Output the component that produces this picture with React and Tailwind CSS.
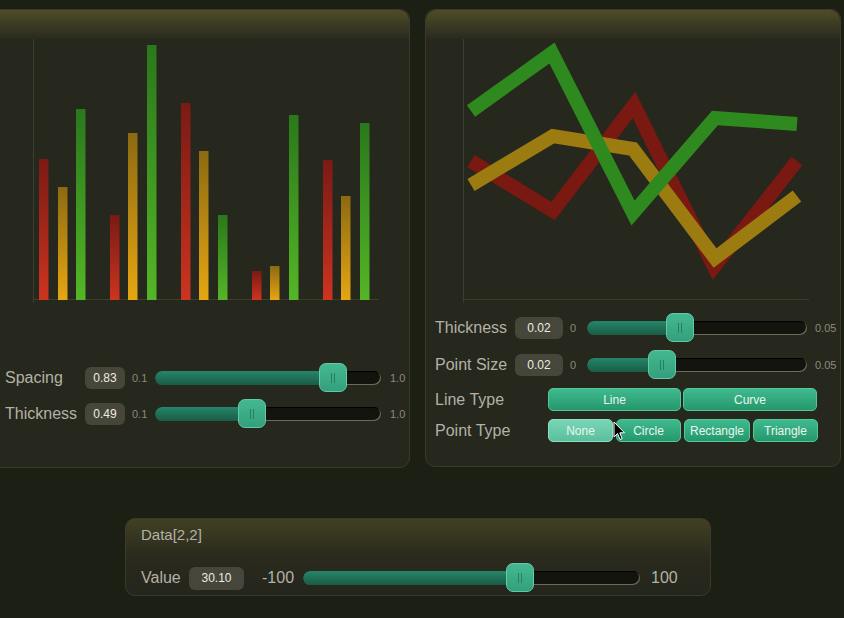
import React from "react";

const FONT = { fontFamily: '"Liberation Sans", Arial, sans-serif' };

function Slider({ trackW, thumbL, fillW }) {
  return (
    <div className={`relative h-[14px] rounded-full bg-[#14140f] shadow-[inset_-1px_-1px_0_#6b6b5a,inset_1px_1px_1px_#000] ${trackW}`}>
      <div className={`absolute left-0 top-0 bottom-0 rounded-full bg-linear-to-b from-[#25866a] to-[#1a5c45] ${fillW}`} />
      <div className={`absolute top-[-8px] w-[28px] h-[29px] rounded-[7px] bg-linear-to-b from-[#44b891] to-[#33a07c] border border-[#62cba6] flex items-center justify-center gap-[2px] ${thumbL}`}>
        <div className="w-[1px] h-[10px] bg-[#2a7d60]" />
        <div className="w-[1px] h-[10px] bg-[#2a7d60]" />
      </div>
    </div>
  );
}

function ValueBox({ w, children }) {
  return (
    <div className={`h-[22px] rounded-[6px] bg-[#47463a] flex items-center justify-center text-[12px] text-[#ecece4] ${w}`}>
      {children}
    </div>
  );
}

function Btn({ w, hover, children }) {
  return (
    <div
      className={`h-[23px] rounded-[5px] border flex items-center justify-center text-[12px] text-[#e8f6ee] ${w} ${
        hover
          ? "bg-linear-to-b from-[#78d6b6] to-[#5abf9e] border-[#8ce0c2]"
          : "bg-linear-to-b from-[#3fba8f] to-[#25976d] border-[#55c79d]"
      }`}
    >
      {children}
    </div>
  );
}

const bars = [
  [38, 158, "r"], [57, 186, "o"], [75, 108, "g"],
  [109, 214, "r"], [127, 132, "o"], [146, 44, "g"],
  [180, 102, "r"], [198, 150, "o"], [217, 214, "g"],
  [251, 270, "r"], [269, 265, "o"], [288, 114, "g"],
  [322, 159, "r"], [340, 195, "o"], [359, 122, "g"],
];

function BarChart() {
  return (
    <svg className="block" width="422" height="270" viewBox="-12 38 422 270">
      <defs>
        <linearGradient id="gr" x1="0" y1="0" x2="0" y2="1">
          <stop offset="0" stopColor="#7a1a14" />
          <stop offset="1" stopColor="#cc3420" />
        </linearGradient>
        <linearGradient id="go" x1="0" y1="0" x2="0" y2="1">
          <stop offset="0" stopColor="#8c6a12" />
          <stop offset="1" stopColor="#e6a612" />
        </linearGradient>
        <linearGradient id="gg" x1="0" y1="0" x2="0" y2="1">
          <stop offset="0" stopColor="#2a781c" />
          <stop offset="1" stopColor="#54b626" />
        </linearGradient>
      </defs>
      <line x1="32.5" y1="37" x2="32.5" y2="302" stroke="#3a3e30" strokeWidth="1" />
      <line x1="32" y1="298.5" x2="378" y2="298.5" stroke="#3a3e30" strokeWidth="1" />
      {bars.map(([x, top, c], i) => (
        <rect key={i} x={x} y={top} width="9.5" height={299 - top} fill={`url(#g${c})`} />
      ))}
    </svg>
  );
}

function LineChart() {
  return (
    <svg className="block" width="416" height="267" viewBox="425 38 416 267">
      <line x1="462.5" y1="37" x2="462.5" y2="302" stroke="#3a3e30" strokeWidth="1" />
      <line x1="462" y1="298.5" x2="808" y2="298.5" stroke="#3a3e30" strokeWidth="1" />
      <polyline
        points="470,160 552,210 633,104 713,266 796,160"
        fill="none"
        stroke="#7a1812"
        strokeWidth="14"
        strokeLinejoin="miter"
      />
      <polyline
        points="470,184 552,135 632,148 714,257 796,195"
        fill="none"
        stroke="#9c7c10"
        strokeWidth="14"
        strokeLinejoin="miter"
      />
      <polyline
        points="470,110 551,52 632,212 714,117 796,123"
        fill="none"
        stroke="#2e8a1e"
        strokeWidth="14"
        strokeLinejoin="miter"
      />
    </svg>
  );
}

function Header() {
  return <div className="h-[29px] rounded-t-[10px] bg-linear-to-b from-[#4f4d26] to-[#2a2a1e]" />;
}

export default function App() {
  return (
    <div
      className="relative w-[844px] h-[618px] overflow-hidden bg-[#1c2014]"
      style={FONT}
    >
      <div className="flex pt-[9px]">
        {/* Left panel */}
        <div className="ml-[-12px] w-[422px] h-[459px] rounded-[10px] bg-[#26271d] border border-[#3a3a2b] flex flex-col">
          <Header />
          <BarChart />
          <div className="mt-[54px] flex flex-col gap-[6px] pl-[16px]">
            <div className="flex items-center h-[30px]">
              <div className="w-[80px] text-[16px] text-[#b2b2a6]">Spacing</div>
              <ValueBox w="w-[40px]">0.83</ValueBox>
              <div className="ml-[7px] w-[23px] text-[11px] text-[#8a8a7e]">0.1</div>
              <Slider trackW="w-[226px]" thumbL="left-[164px]" fillW="w-[180px]" />
              <div className="ml-[9px] text-[11px] text-[#8a8a7e]">1.0</div>
            </div>
            <div className="flex items-center h-[30px]">
              <div className="w-[80px] text-[16px] text-[#b2b2a6]">Thickness</div>
              <ValueBox w="w-[40px]">0.49</ValueBox>
              <div className="ml-[7px] w-[23px] text-[11px] text-[#8a8a7e]">0.1</div>
              <Slider trackW="w-[226px]" thumbL="left-[83px]" fillW="w-[98px]" />
              <div className="ml-[9px] text-[11px] text-[#8a8a7e]">1.0</div>
            </div>
          </div>
        </div>

        {/* Right panel */}
        <div className="ml-[15px] w-[416px] h-[458px] rounded-[10px] bg-[#26271d] border border-[#3a3a2b] flex flex-col">
          <Header />
          <LineChart />
          <div className="mt-[7px] flex flex-col pl-[9px]">
            <div className="flex items-center h-[30px]">
              <div className="w-[80px] text-[16px] text-[#b2b2a6]">Thickness</div>
              <ValueBox w="w-[48px]">0.02</ValueBox>
              <div className="ml-[7px] w-[17px] text-[11px] text-[#8a8a7e]">0</div>
              <Slider trackW="w-[220px]" thumbL="left-[79px]" fillW="w-[94px]" />
              <div className="ml-[8px] text-[11px] text-[#8a8a7e]">0.05</div>
            </div>
            <div className="mt-[7px] flex items-center h-[30px]">
              <div className="w-[80px] text-[16px] text-[#b2b2a6]">Point Size</div>
              <ValueBox w="w-[48px]">0.02</ValueBox>
              <div className="ml-[7px] w-[17px] text-[11px] text-[#8a8a7e]">0</div>
              <Slider trackW="w-[220px]" thumbL="left-[61px]" fillW="w-[76px]" />
              <div className="ml-[8px] text-[11px] text-[#8a8a7e]">0.05</div>
            </div>
            <div className="mt-[8px] flex items-center h-[23px]">
              <div className="w-[113px] text-[16px] text-[#b2b2a6]">Line Type</div>
              <div className="flex gap-[2px]">
                <Btn w="w-[133px]">Line</Btn>
                <Btn w="w-[134px]">Curve</Btn>
              </div>
            </div>
            <div className="mt-[8px] flex items-center h-[23px]">
              <div className="w-[113px] text-[16px] text-[#b2b2a6]">Point Type</div>
              <div className="flex gap-[3px]">
                <Btn w="w-[65px]" hover>None</Btn>
                <Btn w="w-[65px]">Circle</Btn>
                <Btn w="w-[66px]">Rectangle</Btn>
                <Btn w="w-[65px]">Triangle</Btn>
              </div>
            </div>
          </div>
        </div>
      </div>

      {/* Bottom panel */}
      <div className="ml-[125px] mt-[50px] w-[586px] h-[78px] rounded-[10px] border border-[#3a3a2b] bg-linear-to-b from-[#424022] via-[#2a2a1e] to-[#24251c] pl-[15px] pt-[6px]">
        <div className="h-[20px] flex items-center text-[15px] text-[#b2b2a6]">Data[2,2]</div>
        <div className="mt-[19px] flex items-center h-[28px]">
          <div className="w-[48px] text-[16px] text-[#b2b2a6]">Value</div>
          <div className="h-[23px] w-[55px] rounded-[6px] bg-[#47463a] flex items-center justify-center text-[12px] text-[#ecece4]">30.10</div>
          <div className="ml-[18px] w-[41px] text-[16px] text-[#b2b2a6]">-100</div>
          <Slider trackW="w-[337px]" thumbL="left-[203px]" fillW="w-[218px]" />
          <div className="ml-[11px] text-[16px] text-[#b2b2a6]">100</div>
        </div>
      </div>

      {/* Mouse cursor */}
      <svg className="absolute left-[613px] top-[421px]" width="13" height="20" viewBox="0 0 13 20">
        <path d="M1 1 L1 16 L4.5 12.5 L7 18.5 L9.2 17.6 L6.8 11.8 L11.5 11.8 Z" fill="#000" stroke="#fff" strokeWidth="1" strokeLinejoin="round" />
      </svg>
    </div>
  );
}
